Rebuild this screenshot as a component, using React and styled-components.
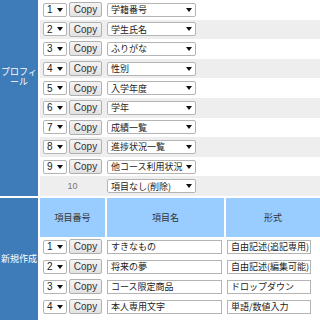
import React from 'react';
import styled, { createGlobalStyle } from 'styled-components';

const GlobalStyle = createGlobalStyle`
    html, body {
        margin: 0;
        padding: 0;
        background: #ffffff;
        overflow: hidden;
    }
    body {
        font-family: "Liberation Sans", "Noto Sans CJK JP", sans-serif;
        font-size: 10px;
        color: #222;
    }
`;

const Page = styled.div`
    display: flex;
    flex-direction: column;
    gap: 2px;
    width: 320px;
    height: 320px;
    overflow: hidden;
`;

const Section = styled.div`
    display: flex;
    gap: 2px;
    flex: ${(p) => (p.$fill ? 1 : '0 0 auto')};
`;

const SideLabel = styled.div`
    width: 38px;
    flex-shrink: 0;
    background: #3d7cb9;
    color: #ffffff;
    font-family: "Noto Sans CJK JP", sans-serif;
    font-size: 9px;
    line-height: 10px;
    text-align: center;
    display: flex;
    align-items: ${(p) => (p.$top ? 'flex-start' : 'center')};
    justify-content: center;
    padding-top: ${(p) => p.$top || 0}px;
    box-sizing: border-box;
`;

const Body = styled.div`
    flex: 1;
    display: flex;
    flex-direction: column;
`;

const Row = styled.div`
    display: flex;
    align-items: center;
    height: ${(p) => p.$h}px;
    background: ${(p) => (p.$alt ? '#eeeeee' : '#ffffff')};
`;

const NumCell = styled.div`
    width: 67px;
    flex-shrink: 0;
    display: flex;
    align-items: center;
    gap: 2px;
    padding-left: 3px;
    box-sizing: border-box;
`;

const PlainNum = styled.div`
    width: 65px;
    flex-shrink: 0;
    text-align: center;
    color: #777;
    font-size: 9px;
`;

const Select = styled.div`
    width: ${(p) => p.$w}px;
    height: 14px;
    margin-left: ${(p) => p.$ml || 0}px;
    box-sizing: border-box;
    border: 1px solid #b4b4b4;
    border-radius: 2px;
    background: #ffffff;
    display: flex;
    align-items: center;
    justify-content: space-between;
    padding: 0 3px 0 3px;
    font-size: ${(p) => (p.$jp ? 9 : 10)}px;
    font-family: ${(p) => (p.$jp ? '"Noto Sans CJK JP", sans-serif' : '"Liberation Sans", sans-serif')};
    color: #222;
    white-space: nowrap;
    overflow: hidden;
`;

const Arrow = styled.span`
    width: 0;
    height: 0;
    border-left: 3px solid transparent;
    border-right: 3px solid transparent;
    border-top: 4px solid #111;
    flex-shrink: 0;
    margin-left: 2px;
`;

const CopyButton = styled.button`
    width: 33px;
    height: 15px;
    padding: 0;
    box-sizing: border-box;
    border: 1px solid #b0b0b0;
    border-radius: 2px;
    background: linear-gradient(#f4f4f4, #e2e2e2);
    font-family: "Liberation Sans", sans-serif;
    font-size: 10px;
    color: #333;
    line-height: 13px;
`;

const TextBox = styled.div`
    width: ${(p) => p.$w}px;
    height: 14px;
    margin-left: ${(p) => p.$ml || 0}px;
    box-sizing: border-box;
    border: 1px solid #b4b4b4;
    background: #ffffff;
    display: flex;
    align-items: center;
    padding-left: 3px;
    font-family: "Noto Sans CJK JP", sans-serif;
    font-size: 9px;
    color: #222;
    white-space: nowrap;
    overflow: hidden;
`;

const HeaderRow = styled.div`
    display: flex;
    gap: 2px;
    height: 39px;
`;

const HeaderCell = styled.div`
    width: ${(p) => (p.$w ? `${p.$w}px` : 'auto')};
    flex: ${(p) => (p.$w ? '0 0 auto' : '1')};
    background: #99ccff;
    display: flex;
    align-items: center;
    justify-content: center;
    font-family: "Noto Sans CJK JP", sans-serif;
    font-size: 9px;
    color: #333;
`;

const profile = ['学籍番号', '学生氏名', 'ふりがな', '性別', '入学年度', '学年', '成績一覧', '進捗状況一覧', '他コース利用状況'];

const created = [
    ['すきなもの', '自由記述(追記専用)'],
    ['将来の夢', '自由記述(編集可能)'],
    ['コース限定商品', 'ドロップダウン'],
    ['本人専用文字', '単語/数値入力'],
];

export default function App() {
    return (
        <>
            <GlobalStyle />
            <Page>
                <Section>
                    <SideLabel $top={67}>プロフィール</SideLabel>
                    <Body>
                        {profile.map((name, i) => (
                            <Row key={name} $h={19.6} $alt={i % 2 === 1}>
                                <NumCell>
                                    <Select $w={24}>{i + 1}<Arrow /></Select>
                                    <CopyButton>Copy</CopyButton>
                                </NumCell>
                                <Select $w={89} $jp>{name}<Arrow /></Select>
                            </Row>
                        ))}
                        <Row $h={19.6} $alt>
                            <PlainNum>10</PlainNum>
                            <Select $w={89} $jp $ml={2}>項目なし(削除)<Arrow /></Select>
                        </Row>
                    </Body>
                </Section>
                <Section $fill>
                    <SideLabel>新規作成</SideLabel>
                    <Body>
                        <HeaderRow>
                            <HeaderCell $w={65}>項目番号</HeaderCell>
                            <HeaderCell $w={117}>項目名</HeaderCell>
                            <HeaderCell>形式</HeaderCell>
                        </HeaderRow>
                        {created.map(([name, kind], i) => (
                            <Row key={name} $h={20}>
                                <NumCell>
                                    <Select $w={24}>{i + 1}<Arrow /></Select>
                                    <CopyButton>Copy</CopyButton>
                                </NumCell>
                                <TextBox $w={115}>{name}</TextBox>
                                <TextBox $w={84} $ml={5}>{kind}</TextBox>
                            </Row>
                        ))}
                    </Body>
                </Section>
            </Page>
        </>
    );
}
